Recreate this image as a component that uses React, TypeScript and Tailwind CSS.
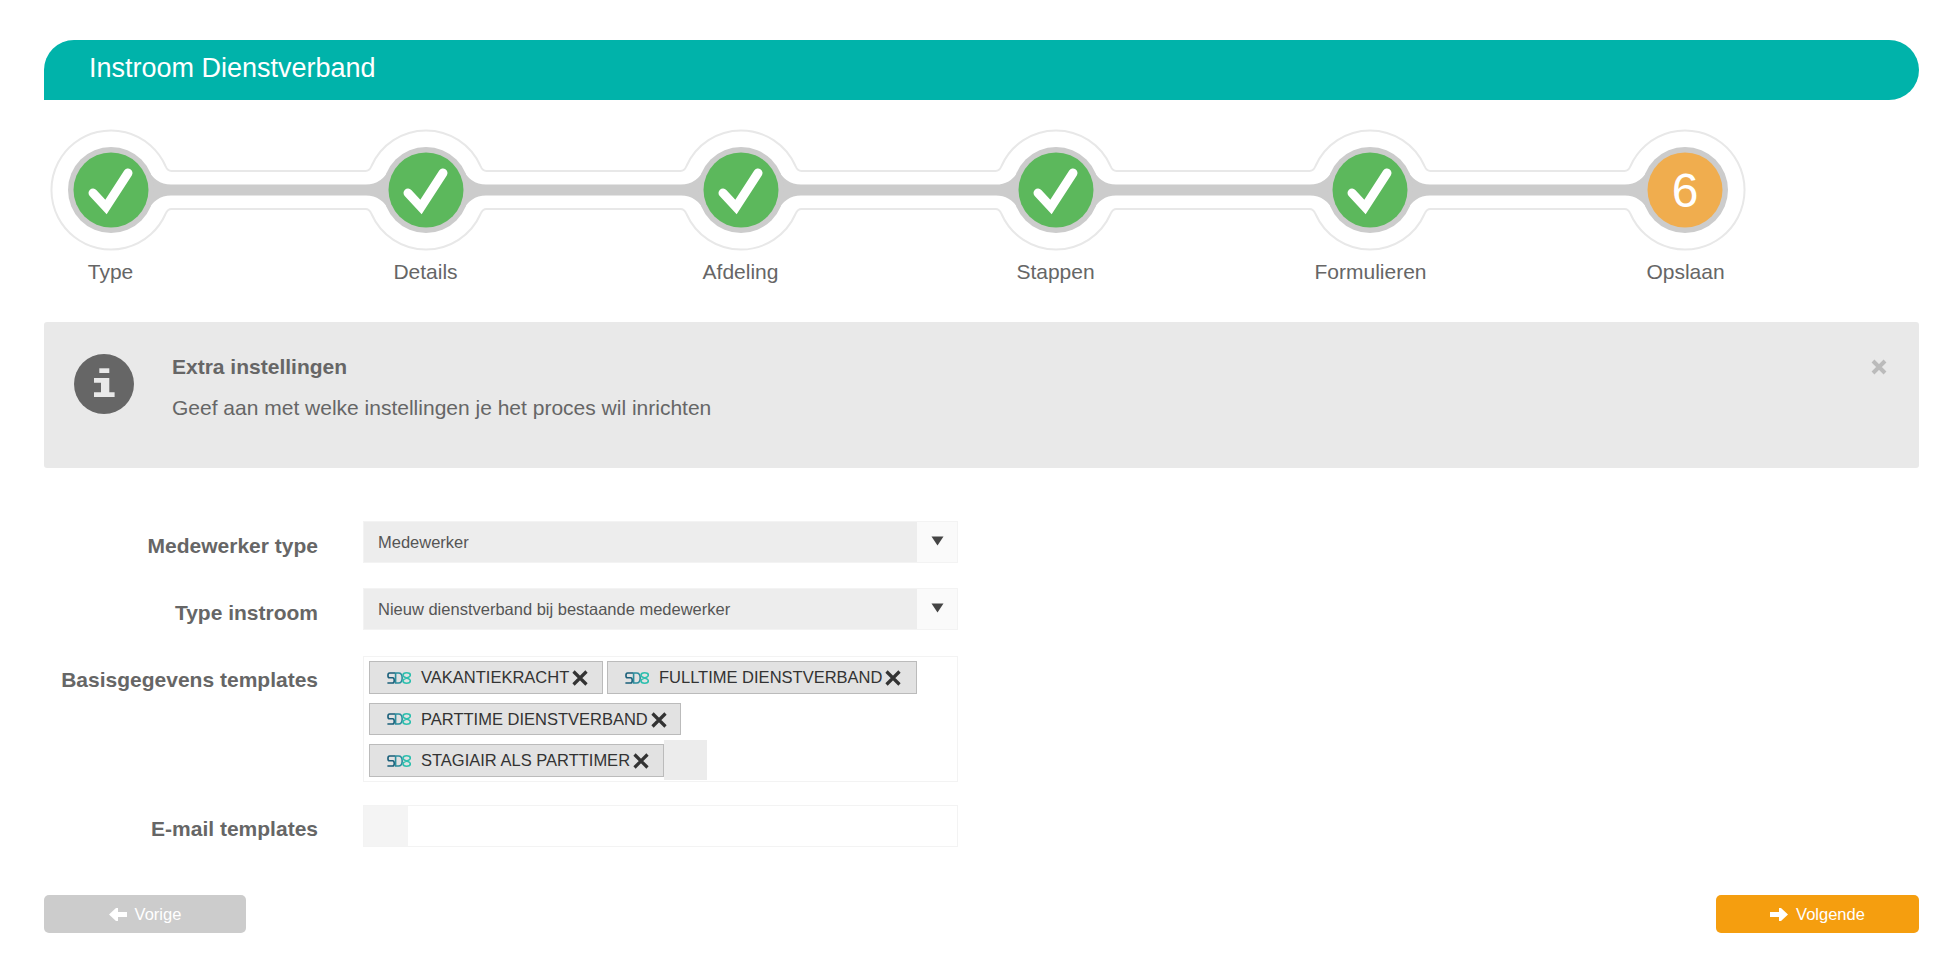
import React from "react";

const FONT = "font-['Liberation_Sans',Arial,sans-serif]";
const CENTERS = [67, 382, 697, 1012, 1326, 1641];
const STEPS = ["Type", "Details", "Afdeling", "Stappen", "Formulieren", "Opslaan"];
const CY = 60;

function outline() {
  const top = CY - 19;
  const bottom = CY + 19;
  const parts: string[] = [];
  const dx = 54.5;
  const dy = 24;
  const r = 59.55;
  CENTERS.forEach((c, i) => {
    const next = CENTERS[i + 1];
    if (next !== undefined) {
      parts.push(`M${c + dx},${CY - dy} Q${c + dx + 2},${top} ${c + dx + 6},${top} L${next - dx - 6},${top} Q${next - dx - 2},${top} ${next - dx},${CY - dy}`);
      parts.push(`M${c + dx},${CY + dy} Q${c + dx + 2},${bottom} ${c + dx + 6},${bottom} L${next - dx - 6},${bottom} Q${next - dx - 2},${bottom} ${next - dx},${CY + dy}`);
    }
    if (i === 0) {
      parts.push(`M${c + dx},${CY - dy} A${r},${r} 0 1 0 ${c + dx},${CY + dy}`);
    } else if (i === CENTERS.length - 1) {
      parts.push(`M${c - dx},${CY - dy} A${r},${r} 0 1 1 ${c - dx},${CY + dy}`);
    } else {
      parts.push(`M${c - dx},${CY - dy} A${r},${r} 0 0 1 ${c + dx},${CY - dy}`);
      parts.push(`M${c - dx},${CY + dy} A${r},${r} 0 0 0 ${c + dx},${CY + dy}`);
    }
  });
  return parts.join(" ");
}

function bars() {
  const t = CY - 5.5;
  const b = CY + 5.5;
  return CENTERS.slice(0, -1)
    .map((c, i) => {
      const n = CENTERS[i + 1];
      return `M${c + 36},${CY - 22} Q${c + 44},${t} ${c + 60},${t} L${n - 60},${t} Q${n - 44},${t} ${n - 36},${CY - 22} L${n - 36},${CY + 22} Q${n - 44},${b} ${n - 60},${b} L${c + 60},${b} Q${c + 44},${b} ${c + 36},${CY + 22} Z`;
    })
    .join(" ");
}

function Stepper() {
  return (
    <div className="mt-[30px] w-[1660px]">
      <svg width="1660" height="120" viewBox="0 0 1660 120" className="block overflow-visible">
        <path d={outline()} fill="none" stroke="#e8e8e8" strokeWidth="2" />
        <path d={bars()} fill="#cccccc" />
        {CENTERS.map((c, i) => (
          <g key={c}>
            <circle cx={c} cy={CY} r="43" fill="#cccccc" />
            <circle cx={c} cy={CY} r="37.5" fill={i === 5 ? "#f0ad4e" : "#5cb85c"} />
            {i < 5 ? (
              <path
                d={`M${c - 18},${CY + 3} L${c - 5},${CY + 17} L${c + 17},${CY - 17}`}
                fill="none"
                stroke="#ffffff"
                strokeWidth="9"
                strokeLinecap="round"
                strokeLinejoin="miter"
              />
            ) : (
              <text x={c} y={CY + 17} textAnchor="middle" fill="#ffffff" fontSize="48" fontFamily="'Liberation Sans',Arial,sans-serif">
                6
              </text>
            )}
          </g>
        ))}
      </svg>
      <div className="mt-[10px] flex ml-[-91px]">
        {STEPS.map((s) => (
          <div key={s} className="w-[315px] shrink-0 text-center text-[21px] leading-6 text-[#666666]">
            {s}
          </div>
        ))}
      </div>
    </div>
  );
}

function Alert() {
  return (
    <div className="mt-[38px] mr-[41px] h-[146px] rounded-[3px] bg-[#e9e9e9] flex relative">
      <div className="ml-[30px] mt-[32px] w-[60px] h-[60px] rounded-full bg-[#666666] flex items-center justify-center shrink-0">
        <svg width="24" height="32" viewBox="0 0 24 32">
          <rect x="7.3" y="0.3" width="10" height="4.7" fill="#e9e9e9" />
          <path d="M2,10 H17.3 V24.3 H22.6 V29 H2 V24.3 H9 V14.7 H2 Z" fill="#e9e9e9" />
        </svg>
      </div>
      <div className="ml-[38px] pt-[33px]">
        <div className="text-[21px] leading-6 font-bold text-[#666666]">Extra instellingen</div>
        <div className="mt-[17px] text-[21px] leading-6 text-[#666666]">Geef aan met welke instellingen je het proces wil inrichten</div>
      </div>
      <svg className="absolute right-[32px] top-[37px]" width="16" height="16" viewBox="0 0 16 16">
        <path d="M2,2 L14,14 M14,2 L2,14" stroke="#bbbbbb" strokeWidth="4" />
      </svg>
    </div>
  );
}

function Label({ children, top }: { children: React.ReactNode; top: string }) {
  return <div className={`w-[274px] text-right text-[21px] leading-6 font-bold text-[#666666] shrink-0 whitespace-nowrap ${top}`}>{children}</div>;
}

function Select({ value }: { value: string }) {
  return (
    <div className="ml-[45px] w-[595px] h-[42px] border border-[#f3f3f3] flex">
      <div className="flex-1 bg-[#ededed] pl-[14px] text-[16.5px] leading-[40px] text-[#555555]">{value}</div>
      <div className="w-[40px] bg-[#fafafa] flex justify-center pt-[14px]">
        <svg width="13" height="10" viewBox="0 0 13 10">
          <path d="M0.5,0.5 H12.5 L6.5,9.5 Z" fill="#444444" />
        </svg>
      </div>
    </div>
  );
}

function Logo() {
  return (
    <svg width="24" height="12" viewBox="0 0 24 12" className="shrink-0" fill="none" strokeWidth="1.6">
      <path d="M8,1 H2.6 C0.4,1 0.4,5.8 2.6,5.8 H5.6 C7.8,5.8 7.8,11 5.6,11 H0.4" stroke="#1a5f7a" />
      <path d="M8.6,1 H11.5 C16.4,1 16.4,11 11.5,11 H8.6 Z" stroke="#2b8d9d" />
      <path d="M16,3.2 C16,0 23.4,0 23.4,3.2 C23.4,6.2 16,5.8 16,8.8 C16,12 23.4,12 23.4,8.8 C23.4,5.8 16,6.2 16,3.2 Z" stroke="#2dbfae" />
    </svg>
  );
}

function Tag({ text, h }: { text: string; h: string }) {
  return (
    <div className={`border border-[#bbbbbb] bg-[#e2e2e2] flex items-center pl-[17px] pr-[2px] text-[16.5px] text-[#333333] whitespace-nowrap ${h}`}>
      <Logo />
      <span className="ml-[10px]">{text}</span>
      <svg className="ml-[3px] mt-[1px]" width="16" height="16" viewBox="0 0 16 16">
        <path d="M1.5,1.5 L14.5,14.5 M14.5,1.5 L1.5,14.5" stroke="#333333" strokeWidth="3.2" />
      </svg>
    </div>
  );
}

function ArrowGlyph({ right }: { right?: boolean }) {
  return (
    <svg width="18" height="13" viewBox="0 0 18 13" className={right ? "-scale-x-100" : ""}>
      <path d="M0,6.5 L7,0 H9 V4 H18 V9 H9 V13 H7 Z" fill="#ffffff" />
    </svg>
  );
}

export default function App() {
  return (
    <div className={`${FONT} bg-white w-[1960px] h-[967px] overflow-hidden pl-[44px] pt-[40px]`}>
      <div className="mr-[41px] h-[60px] bg-[#00b3aa] rounded-t-[30px] rounded-br-[30px] pl-[45px] text-white text-[27px] leading-[56px]">
        Instroom Dienstverband
      </div>
      <Stepper />
      <Alert />

      <div className="mt-[53px] flex flex-col">
        <div className="flex">
          <Label top="pt-[13px]">Medewerker type</Label>
          <Select value="Medewerker" />
        </div>
        <div className="flex mt-[25px]">
          <Label top="pt-[13px]">Type instroom</Label>
          <Select value="Nieuw dienstverband bij bestaande medewerker" />
        </div>
        <div className="flex mt-[26px]">
          <Label top="pt-[12px]">Basisgegevens templates</Label>
          <div className="ml-[45px] w-[595px] h-[126px] border border-[#f3f3f3] pl-[5px] pt-[4px]">
            <div className="flex gap-[4px]">
              <Tag text="VAKANTIEKRACHT" h="h-[33px] w-[234px]" />
              <Tag text="FULLTIME DIENSTVERBAND" h="h-[33px] w-[310px]" />
            </div>
            <div className="flex mt-[9px]">
              <Tag text="PARTTIME DIENSTVERBAND" h="h-[32px] w-[312px]" />
            </div>
            <div className="flex items-start -mt-[4px]">
              <div className="mt-[13px]">
                <Tag text="STAGIAIR ALS PARTTIMER" h="h-[33px] w-[295px]" />
              </div>
              <div className="w-[43px] h-[40px] mt-[9px] bg-[#ececec]" />
            </div>
          </div>
        </div>
        <div className="flex mt-[23px]">
          <Label top="pt-[12px]">E-mail templates</Label>
          <div className="ml-[45px] w-[595px] h-[42px] border border-[#f3f3f3]">
            <div className="w-[44px] h-full bg-[#f4f4f4]" />
          </div>
        </div>
      </div>

      <div className="mt-[48px] mr-[41px] flex justify-between">
        <button className="w-[202px] h-[38px] rounded-[5px] bg-[#cccccc] text-white text-[16.5px] flex items-center justify-center gap-[8px]">
          <ArrowGlyph />
          Vorige
        </button>
        <button className="w-[203px] h-[38px] rounded-[5px] bg-[#f59e0f] text-white text-[16.5px] flex items-center justify-center gap-[8px]">
          <ArrowGlyph right />
          Volgende
        </button>
      </div>
    </div>
  );
}
